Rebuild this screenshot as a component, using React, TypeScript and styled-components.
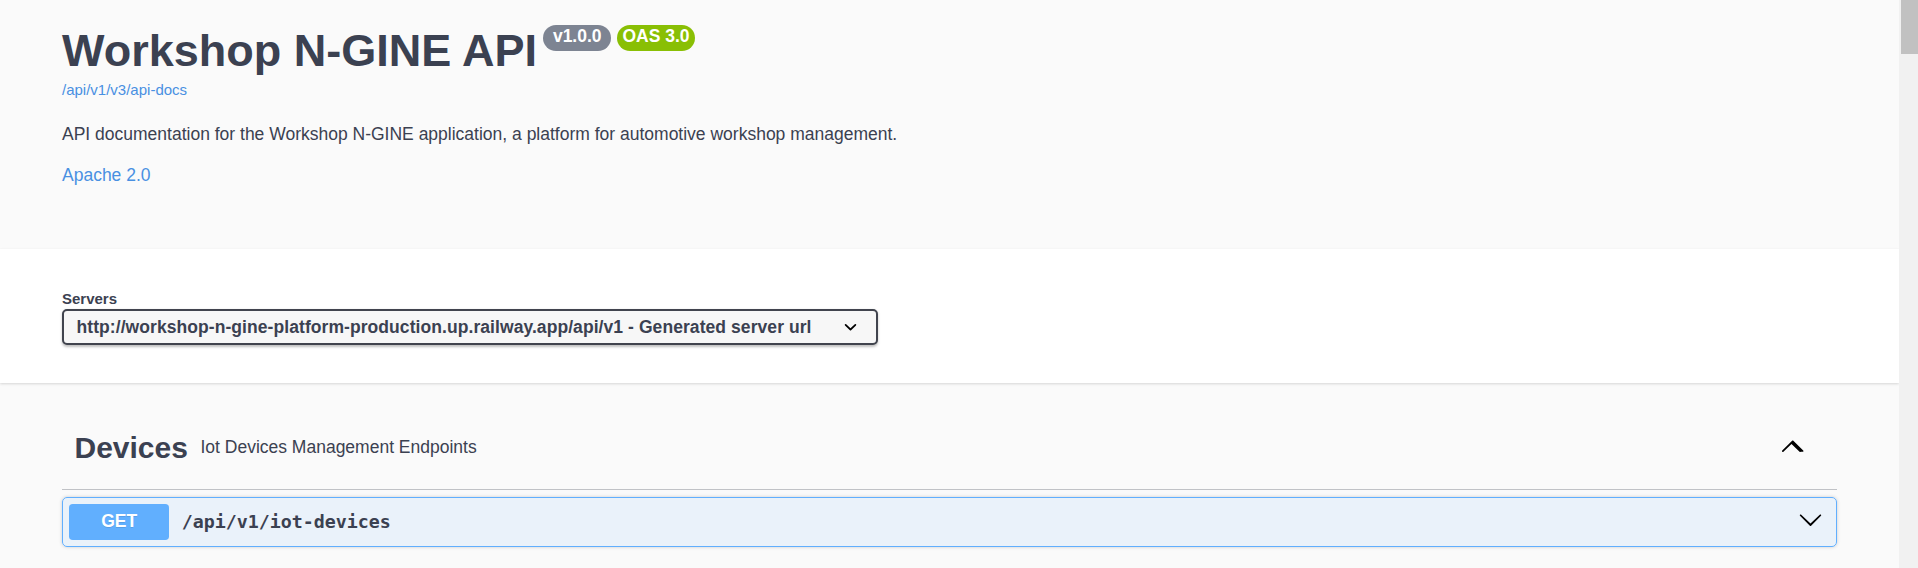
import styled, { createGlobalStyle } from 'styled-components'

type Method = 'get' | 'post' | 'put' | 'delete'

interface Operation {
  method: Method
  path: string
}

interface Tag {
  name: string
  description: string
  open: boolean
  operations: Operation[]
}

const methodColors: Record<Method, string> = {
  get: '#61affe',
  post: '#49cc90',
  put: '#fca130',
  delete: '#f93e3e',
}

const tags: Tag[] = [
  {
    name: 'Devices',
    description: 'Iot Devices Management Endpoints',
    open: true,
    operations: [{ method: 'get', path: '/api/v1/iot-devices' }],
  },
]

const GlobalStyle = createGlobalStyle`
  html, body {
    margin: 0;
    padding: 0;
    background: #fafafa;
    overflow: hidden;
  }
  body {
    font-family: "Liberation Sans", Arial, sans-serif;
    color: #3b4151;
  }
`

const ChevronDown = () => (
  <svg width="25" height="25" viewBox="0 0 20 20" aria-hidden="true">
    <path
      fill="#000"
      d="M17.418 6.109c.272-.268.709-.268.979 0s.271.701 0 .969l-7.908 7.83c-.27.268-.707.268-.979 0l-7.908-7.83c-.27-.268-.27-.701 0-.969.271-.268.709-.268.979 0L10 13.25z"
    />
  </svg>
)

const ChevronUp = () => (
  <svg width="25" height="25" viewBox="0 0 20 20" aria-hidden="true">
    <path
      fill="#000"
      d="M17.418 14.908c-.272.268-.709.268-.979 0L10 8.75l-6.439 6.158c-.27.268-.707.268-.979 0-.27-.268-.27-.701 0-.969l7.908-7.83c.27-.268.707-.268.979 0l7.908 7.83c.27.268.27.701 0 .969z"
    />
  </svg>
)

const SelectArrow = () => (
  <svg width="25" height="25" viewBox="0 0 20 20" aria-hidden="true">
    <path
      fill="#000"
      d="M13.418 7.859a.695.695 0 0 1 .978 0 .68.68 0 0 1 0 .969l-3.908 3.83a.697.697 0 0 1-.979 0l-3.908-3.83a.68.68 0 0 1 0-.969.695.695 0 0 1 .978 0L10 11z"
    />
  </svg>
)

const OperationRow = ({ op }: { op: Operation }) => (
  <Opblock $color={methodColors[op.method]}>
    <Summary>
      <MethodTag $color={methodColors[op.method]}>{op.method.toUpperCase()}</MethodTag>
      <PathText>{op.path}</PathText>
      <OpToggle title="Expand operation">
        <ChevronDown />
      </OpToggle>
    </Summary>
  </Opblock>
)

const App = () => {
  return (
    <Shell>
      <GlobalStyle />
      <Main>
        <InfoSection>
          <Wrapper>
            <Title>
              Workshop N-GINE API
              <Badge $bg="#7d8492">{' v1.0.0 '}</Badge>
              <Badge $bg="#89bf04">OAS 3.0</Badge>
            </Title>
            <DocsLink href="#">/api/v1/v3/api-docs</DocsLink>
            <Description>
              API documentation for the Workshop N-GINE application, a platform for automotive workshop management.
            </Description>
            <License href="#">Apache 2.0</License>
          </Wrapper>
        </InfoSection>

        <SchemeContainer>
          <Wrapper>
            <ServersLabel>Servers</ServersLabel>
            <SelectWrap>
              <ServerSelect defaultValue="prod">
                <option value="prod">
                  http://workshop-n-gine-platform-production.up.railway.app/api/v1 - Generated server url
                </option>
              </ServerSelect>
              <SelectIcon>
                <SelectArrow />
              </SelectIcon>
            </SelectWrap>
          </Wrapper>
        </SchemeContainer>

        <Wrapper>
          {tags.map((tag) => (
            <TagSection key={tag.name}>
              <TagHeader>
                <TagName>{tag.name}</TagName>
                <TagDesc>{tag.description}</TagDesc>
                <TagToggle title="Collapse operation">
                  {tag.open ? <ChevronUp /> : <ChevronDown />}
                </TagToggle>
              </TagHeader>
              {tag.open && tag.operations.map((op) => (
                <OperationRow key={op.method + op.path} op={op} />
              ))}
            </TagSection>
          ))}
        </Wrapper>
      </Main>
      <ScrollRail>
        <ScrollThumb />
      </ScrollRail>
    </Shell>
  )
}

export default App

const Shell = styled.div`
  display: flex;
  height: 100vh;
  background: #fafafa;
`

const Main = styled.main`
  flex: 1;
  min-width: 0;
  overflow: hidden;
`

const ScrollRail = styled.div`
  flex: none;
  width: 19px;
  background: #f1f1f1;
`

const ScrollThumb = styled.div`
  height: 54px;
  margin-left: 2px;
  background: #c1c1c1;
`

const Wrapper = styled.div`
  box-sizing: border-box;
  max-width: 1825px;
  margin: 0 auto;
  padding: 0 25px;
`

const InfoSection = styled.section`
  padding: 25px 0 63.75px;
`

const Title = styled.h2`
  display: flex;
  align-items: flex-start;
  margin: 0;
  font-size: 45px;
  line-height: 52px;
  font-weight: 700;
  color: #3b4151;
`

const Badge = styled.small<{ $bg: string }>`
  margin-left: 6px;
  padding: 1px 5px 4px;
  font-size: 17.5px;
  line-height: 21px;
  font-weight: 700;
  white-space: pre;
  color: #fff;
  background: ${(p) => p.$bg};
  border-radius: 71px;
`

const DocsLink = styled.a`
  display: block;
  margin-top: 4px;
  font-size: 15px;
  line-height: 17.25px;
  color: #4990e2;
  text-decoration: none;
`

const Description = styled.p`
  margin: 25.5px 0 0;
  font-size: 17.5px;
  line-height: 20px;
  color: #3b4151;
`

const License = styled.a`
  display: block;
  margin-top: 21px;
  font-size: 17.5px;
  line-height: 20px;
  color: #4990e2;
  text-decoration: none;
`

const SchemeContainer = styled.section`
  background: #fff;
  box-shadow: 0 1.25px 2.5px 0 rgba(0, 0, 0, 0.15);
  padding: 41px 0 37.5px;
  margin-bottom: 25px;
`

const ServersLabel = styled.span`
  display: block;
  margin-bottom: 2.5px;
  font-size: 15px;
  line-height: 17.25px;
  font-weight: 700;
  color: #3b4151;
`

const SelectWrap = styled.div`
  position: relative;
  display: inline-block;
`

const ServerSelect = styled.select`
  appearance: none;
  box-sizing: border-box;
  height: 36px;
  margin: 0;
  padding: 0 63px 0 12.5px;
  font-family: "Liberation Sans", Arial, sans-serif;
  font-size: 17.5px;
  font-weight: 700;
  letter-spacing: 0.07px;
  color: #3b4151;
  background: #f7f7f7;
  border: 2.5px solid #41444e;
  border-radius: 5px;
  box-shadow: 0 1.25px 2.5px 0 rgba(0, 0, 0, 0.25);
  outline: none;
`

const SelectIcon = styled.span`
  position: absolute;
  right: 15px;
  top: 50%;
  transform: translateY(-50%);
  display: flex;
  pointer-events: none;
`

const TagSection = styled.div`
  display: flex;
  flex-direction: column;
`

const TagHeader = styled.h3`
  display: flex;
  align-items: center;
  min-height: 55px;
  margin: 0 0 6.25px;
  padding: 12.5px 25px 14px 12.5px;
  border-bottom: 1px solid rgba(59, 65, 81, 0.3);
  font-size: 30px;
  font-weight: 700;
  color: #3b4151;
  cursor: pointer;
`

const TagName = styled.span`
  white-space: nowrap;
`

const TagDesc = styled.small`
  flex: 1;
  padding: 0 12.5px;
  font-size: 17.5px;
  font-weight: 400;
  color: #3b4151;
`

const TagToggle = styled.button`
  display: flex;
  margin: -5px 8px 0 0;
  padding: 0;
  background: none;
  border: none;
  cursor: pointer;
`

const Opblock = styled.div<{ $color: string }>`
  margin-bottom: 18.75px;
  border: 1.25px solid ${(p) => p.$color};
  border-radius: 5px;
  background: ${(p) => p.$color}1a;
  box-shadow: 0 0 3.75px rgba(0, 0, 0, 0.19);
`

const Summary = styled.div`
  display: flex;
  align-items: center;
  padding: 6.25px;
  cursor: pointer;
`

const MethodTag = styled.span<{ $color: string }>`
  min-width: 100px;
  padding: 7.5px 0;
  font-size: 17.5px;
  line-height: 21px;
  font-weight: 700;
  text-align: center;
  color: #fff;
  background: ${(p) => p.$color};
  border-radius: 3.75px;
  text-shadow: 0 1.25px 0 rgba(0, 0, 0, 0.1);
`

const PathText = styled.span`
  flex: 1;
  padding: 0 12.5px;
  font-family: "DejaVu Sans Mono", "Liberation Mono", monospace;
  font-size: 18.3px;
  font-weight: 700;
  color: #3b4151;
`

const OpToggle = styled.button`
  display: flex;
  margin: -4.7px 7.25px 0 0;
  padding: 0;
  background: none;
  border: none;
  cursor: pointer;
`
